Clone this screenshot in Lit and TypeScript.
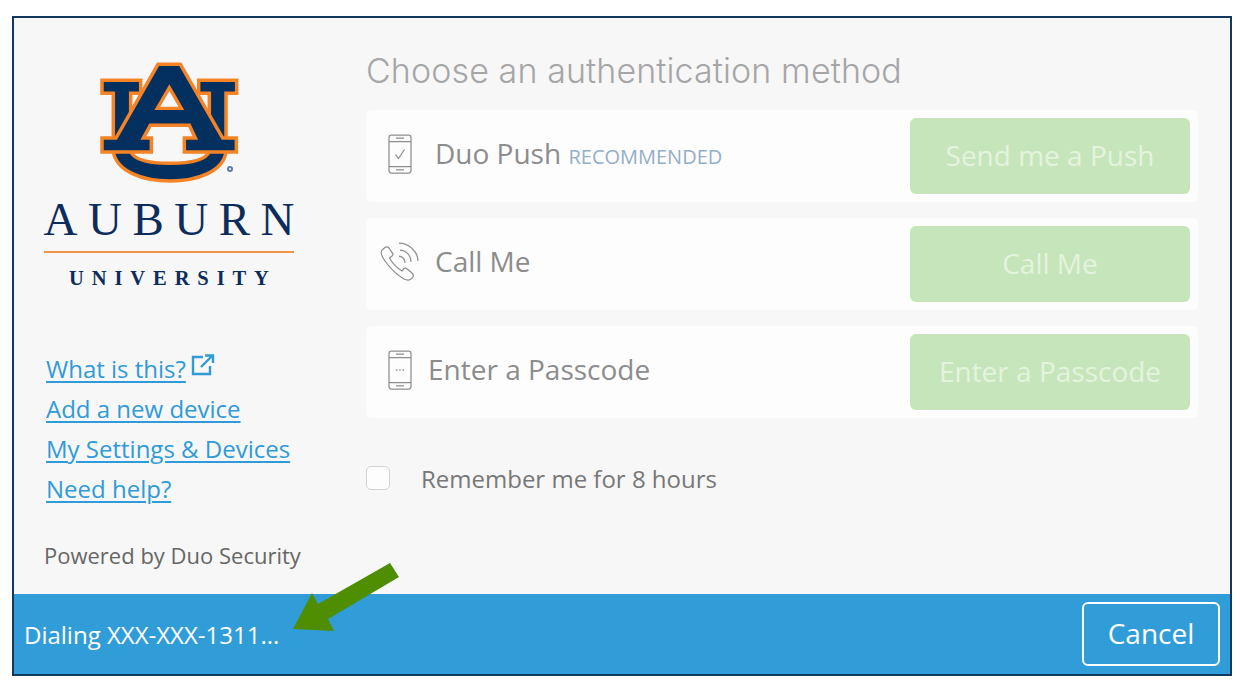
import { LitElement, html, css, svg } from "lit";
import { customElement } from "lit/decorators.js";

const logo = svg`
  <path class="u" d="M36,76 H152 V115 H122 V290 C135,320 190,325 240,325 C290,325 345,320 358,290 V115 H326 V76 H440 V115 H408 V290 C400,350 320,378 240,378 C160,378 80,350 70,290 V115 H36 Z"/>
  <path class="u" d="M204,28 H271 L398,249 H439 V291 H283 V249 H316 L298,211 H181 L160,249 H184 V291 H36 V249 H78 Z"/>
  <path class="tri" d="M238,98 L274,160 H202 Z"/>
  <circle cx="420" cy="342" r="9" fill="#5b7aa0"/>
  <circle cx="420" cy="342" r="3.5" fill="#dfe5ec"/>
`;

const phoneBase = svg`
  <rect x="1" y="1" width="22" height="38" rx="2.5"/>
  <path d="M1,7.5 H23 M1,32.5 H23 M8,4.2 H16 M8,35.8 H16" />
`;

@customElement("app-root")
export class AppRoot extends LitElement {
  static styles = css`
    :host { display: block; width: 1240px; height: 688px; box-sizing: border-box; padding: 16px 8px 12px 12px; background: #fff; font-family: "Open Sans", sans-serif; position: relative; overflow: hidden; }
    .frame { box-sizing: border-box; height: 660px; border: 2px solid #12395b; display: flex; flex-direction: column; background: #f7f7f7; }
    .main { flex: 1; display: flex; min-height: 0; }
    .left { width: 352px; box-sizing: border-box; padding: 37px 0 0 30px; display: flex; flex-direction: column; }
    .logo { width: 250px; display: flex; flex-direction: column; align-items: center; }
    .logo svg { width: 160px; height: 135px; display: block; margin-left: 2px; }
    .auburn { font: 47px/1 "Liberation Serif", serif; letter-spacing: 10.5px; color: #0c2c5c; margin-top: 6px; margin-right: -10.5px; white-space: nowrap; height: 42px; }
    .rule { width: 250px; height: 2px; background: #f0944a; margin-top: 13px; }
    .univ { font: bold 20.5px/1 "Liberation Serif", serif; letter-spacing: 7.9px; color: #0c2c5c; margin-top: 15px; margin-right: -7.9px; white-space: nowrap; }
    .links { margin-top: 60px; padding-left: 2px; display: flex; flex-direction: column; }
    .links div { height: 40px; line-height: 40px; display: flex; align-items: center; gap: 5px; }
    a { color: #2f9bd8; font-size: 24px; text-decoration: underline; text-decoration-thickness: 2px; text-underline-offset: 3px; white-space: nowrap; }
    .ext { width: 24px; height: 24px; margin-top: -8px; fill: none; stroke: #2f9bd8; stroke-width: 2.4; }
    .pow { font-size: 22px; color: #666; margin-top: 32px; line-height: 28px; white-space: nowrap; }
    .right { flex: 1; padding: 32px 32px 0 0; display: flex; flex-direction: column; }
    h1 { margin: 0 0 20px; font: 300 34px/42px Inter, sans-serif; letter-spacing: 0.1px; color: #a6a6a6; white-space: nowrap; height: 40px; }
    .row { height: 92px; background: #fdfdfd; border-radius: 6px; display: flex; align-items: center; margin-bottom: 16px; padding-right: 8px; }
    .ico { fill: none; stroke: #8f8f8f; stroke-width: 1.25; }
    .ico.ph { width: 24px; height: 40px; margin-left: 22px; margin-top: -4px; }
    .ico.call { width: 42px; height: 42px; margin-left: 13px; margin-top: -6px; }
    .label { font-size: 28px; color: #8c8c8c; margin-top: -6px; white-space: nowrap; flex: 1; }
    .label.l1 { margin-left: 23px; }
    .label.l2 { margin-left: 14px; }
    .label.l3 { margin-left: 16px; }
    .rec { font-size: 20px; color: #93aec8; }
    button { width: 280px; height: 76px; border: 0; border-radius: 6px; background: #c7e5bb; color: #e4f3de; font: 28px "Open Sans", sans-serif; padding: 0 0 2px; }
    .rem { display: flex; align-items: center; height: 30px; margin-top: 29px; }
    .box { width: 22px; height: 22px; border: 1px solid #d4d4d4; border-radius: 5px; background: #fdfdfd; }
    .rem span { margin-left: 31px; font-size: 24px; color: #777; }
    .bar { height: 80px; flex: none; background: #319dd8; display: flex; align-items: center; justify-content: space-between; padding: 0 10px; color: #fff; }
    .bar .msg { font-size: 24px; }
    .cancel { width: 138px; height: 64px; box-sizing: border-box; background: transparent; border: 2px solid #fff; border-radius: 6px; color: #fff; font-size: 28px; }
    .arrow { position: absolute; left: 290px; top: 555px; width: 120px; height: 85px; }
  `;

  render() {
    return html`
      <div class="frame">
        <div class="main">
          <div class="left">
            <div class="logo">
              <svg viewBox="0 0 480 405">
                <style>
                  .u { fill: #03305f; stroke: #f58426; stroke-width: 10.5; stroke-linejoin: miter; }
                  .tri { fill: #f7f7f7; stroke: #f58426; stroke-width: 10; }
                </style>
                ${logo}
              </svg>
              <div class="auburn">AUBURN</div>
              <div class="rule"></div>
              <div class="univ">UNIVERSITY</div>
            </div>
            <div class="links">
              <div><a href="#">What is this?</a>
                <svg class="ext" viewBox="0 0 24 24"><path d="M12,4 H2 V21 H19 V13"/><path d="M10,14 L21,3 M14,2.5 H22 V10"/></svg>
              </div>
              <div><a href="#">Add a new device</a></div>
              <div><a href="#">My Settings &amp; Devices</a></div>
              <div><a href="#">Need help?</a></div>
            </div>
            <div class="pow">Powered by Duo Security</div>
          </div>
          <div class="right">
            <h1>Choose an authentication method</h1>
            <div class="row">
              <svg class="ico ph" viewBox="0 0 24 40">${phoneBase}<path d="M7.5,20.5 L10.5,24.5 L16.5,15.5"/></svg>
              <div class="label l1">Duo Push <span class="rec">RECOMMENDED</span></div>
              <button>Send me a Push</button>
            </div>
            <div class="row">
              <svg class="ico call" viewBox="0 0 42 42"><path d="M3,10 C1,13 3,17 6,21 C11,28 18,35 25,39 C29,41 32,40 34,37 C35,35 34,34 33,33 L28,29 C27,28 25.5,28 24.5,29 L23,31 C19,29 13,23 10.5,18 L13,16 C14,15 14,13.5 13,12.5 L10,8 C9,7 7.5,6.5 6,7.5 Z"/><path d="M20,16 C23,16 26,19 26,23"/><path d="M21,10 C26.5,10 32,15 32,22"/><path d="M20,3 C29,3 39,11 39,21"/></svg>
              <div class="label l2">Call Me</div>
              <button>Call Me</button>
            </div>
            <div class="row">
              <svg class="ico ph" viewBox="0 0 24 40">${phoneBase}<path d="M8,20 H9.5 M11.2,20 H12.7 M14.5,20 H16" stroke-width="1.6"/></svg>
              <div class="label l3">Enter a Passcode</div>
              <button>Enter a Passcode</button>
            </div>
            <div class="rem"><div class="box"></div><span>Remember me for 8 hours</span></div>
          </div>
        </div>
        <div class="bar">
          <div class="msg">Dialing XXX-XXX-1311...</div>
          <button class="cancel">Cancel</button>
        </div>
      </div>
      <svg class="arrow" viewBox="0 0 120 85"><path fill="#4f8e00" d="M109,22 L100,8 L28,49 L22,38 L3,74 L44,76 L38,64 Z"/></svg>
    `;
  }
}
